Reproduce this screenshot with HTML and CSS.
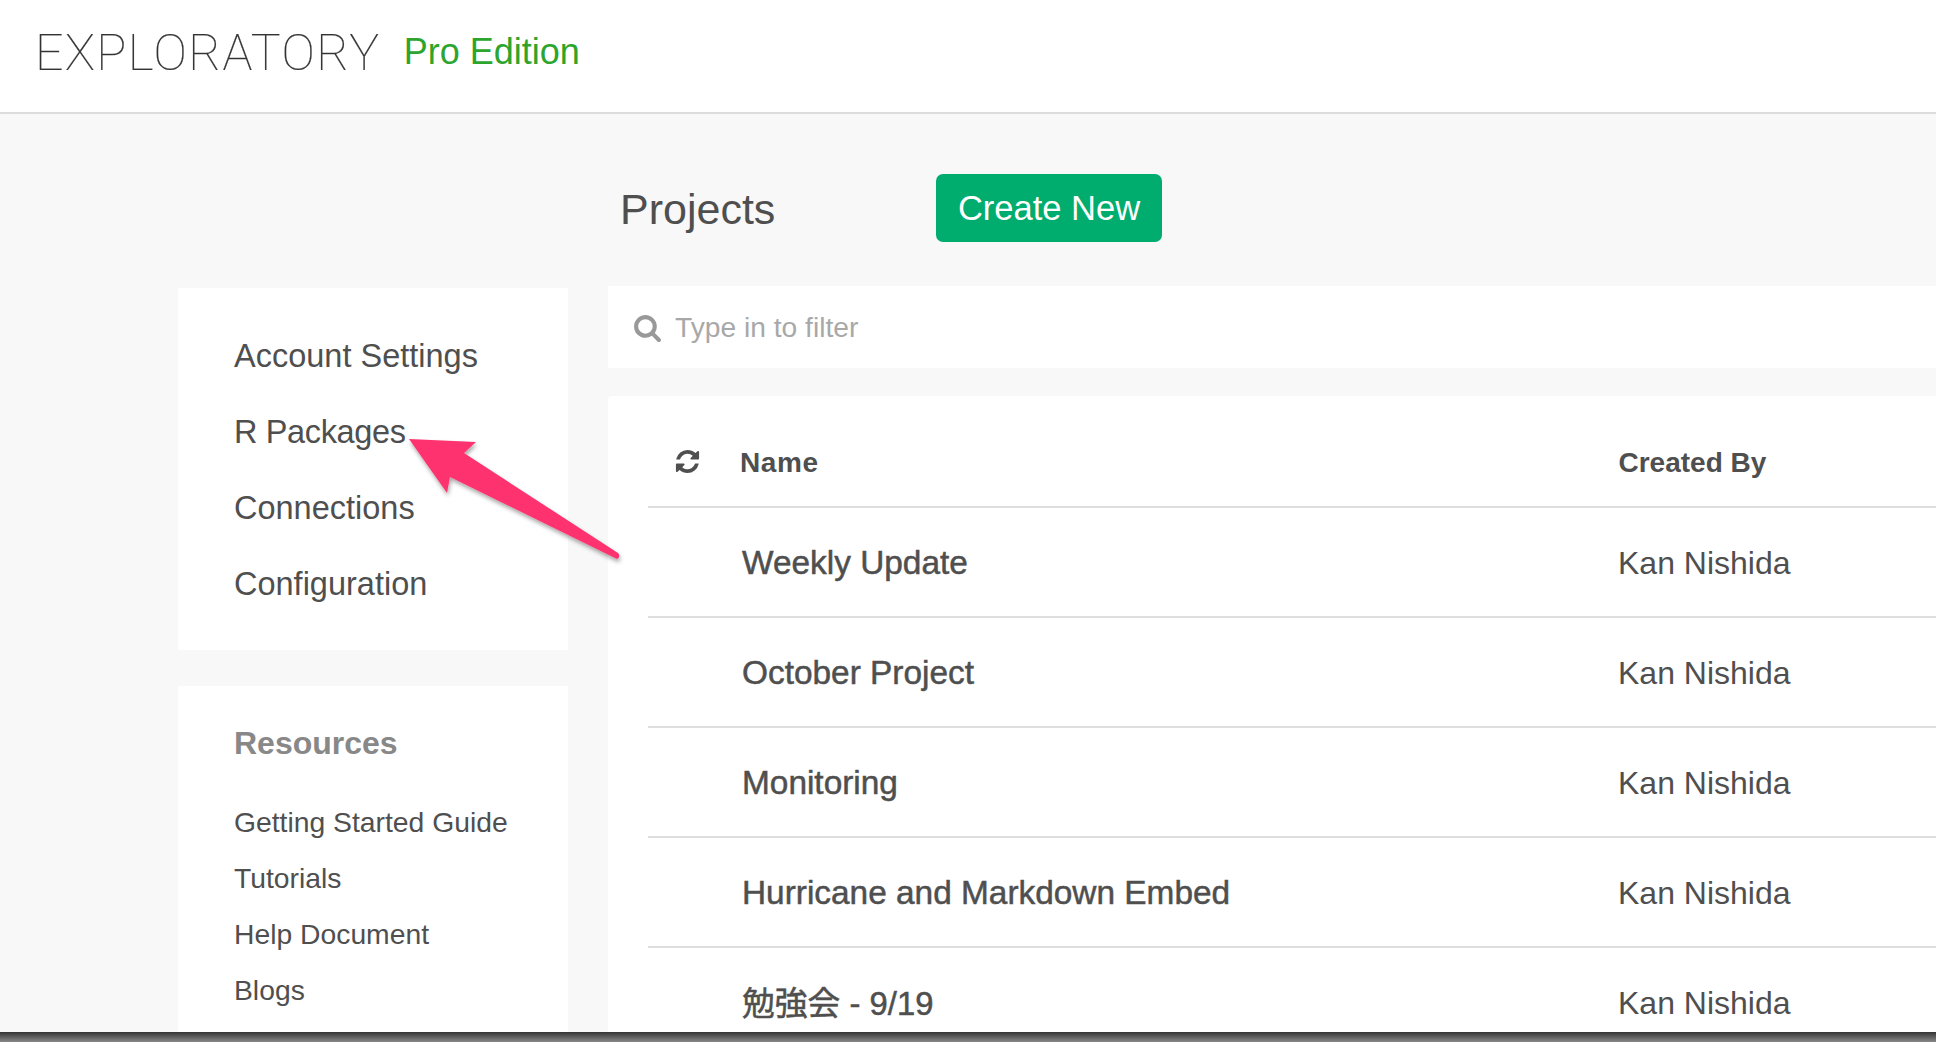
FILE: index.html
```html
<!DOCTYPE html>
<html lang="en">
<head>
<meta charset="UTF-8">
<title>Exploratory - Projects</title>
<link rel="stylesheet" href="styles.css">
</head>
<body>
<header class="topbar">
    <span class="logo">EXPLORATORY</span>
    <span class="edition">Pro Edition</span>
</header>

<div class="page">
    <aside class="sidebar">
        <nav class="card side-menu">
            <a>Account Settings</a>
            <a class="tight">R Packages</a>
            <a>Connections</a>
            <a>Configuration</a>
        </nav>
        <div class="card resources">
            <h3>Resources</h3>
            <a>Getting Started Guide</a>
            <a>Tutorials</a>
            <a>Help Document</a>
            <a>Blogs</a>
        </div>
    </aside>

    <main class="content">
        <div class="title-row">
            <h1>Projects</h1>
            <button class="create-btn">Create New</button>
        </div>
        <div class="filter">
            <svg class="search-icon" viewBox="0 0 1792 1792"><path d="M1216 832q0-185-131.5-316.5t-316.5-131.5-316.5 131.5-131.5 316.5 131.5 316.5 316.5 131.5 316.5-131.5 131.5-316.5zm512 832q0 52-38 90t-90 38q-54 0-90-38l-343-342q-179 124-399 124-143 0-273.5-55.5t-225-150-150-225-55.5-273.5 55.5-273.5 150-225 225-150 273.5-55.5 273.5 55.5 225 150 150 225 55.5 273.5q0 220-124 399l343 343q37 37 37 90z"/></svg>
            <span>Type in to filter</span>
        </div>
        <div class="card table-card">
            <div class="row head-row">
                <svg class="refresh-icon" viewBox="0 0 1792 1792"><path d="M1639 1056q0 5-1 7-64 268-268 434.5t-478 166.5q-146 0-282.5-55t-243.5-157l-129 129q-19 19-45 19t-45-19-19-45v-448q0-26 19-45t45-19h448q26 0 45 19t19 45-19 45l-137 137q71 66 161 102t187 36q134 0 250-65t186-179q11-17 53-117 8-23 30-23h192q13 0 22.5 9.5t9.5 22.5zm25-800v448q0 26-19 45t-45 19h-448q-26 0-45-19t-19-45 19-45l138-138q-148-137-349-137-134 0-250 65t-186 179q-11 17-53 117-8 23-30 23h-199q-13 0-22.5-9.5t-9.5-22.5v-7q65-268 270-434.5t480-166.5q146 0 284 55.5t245 156.5l130-129q19-19 45-19t45 19 19 45z"/></svg>
                <span class="name">Name</span>
                <span class="owner">Created By</span>
            </div>
            <div class="row"><span class="name">Weekly Update</span><span class="owner">Kan Nishida</span></div>
            <div class="row"><span class="name">October Project</span><span class="owner">Kan Nishida</span></div>
            <div class="row"><span class="name">Monitoring</span><span class="owner">Kan Nishida</span></div>
            <div class="row"><span class="name">Hurricane and Markdown Embed</span><span class="owner">Kan Nishida</span></div>
            <div class="row"><span class="name cjk">勉強会 - 9/19</span><span class="owner">Kan Nishida</span></div>
        </div>
    </main>
</div>

<div class="bottom-edge"></div>

<svg class="arrow" viewBox="0 0 240 140" width="240" height="140">
    <defs>
        <filter id="arrowShadow" x="-10%" y="-10%" width="125%" height="130%">
            <feDropShadow dx="1" dy="3" stdDeviation="2" flood-color="#000" flood-opacity="0.35"/>
        </filter>
    </defs>
    <path filter="url(#arrowShadow)" d="M9 9 L76 12 L64 23 L218 123 Q221 127 217 129 L50 47 L47 63 Z"/>
</svg>
</body>
</html>
```

FILE: styles.css
```css
* {
    box-sizing: border-box;
}
html, body {
    height: 100%;
}
body {
    margin: 0;
    display: flex;
    flex-direction: column;
    overflow: hidden;
    background: #f8f8f8;
    color: #4f4f4f;
    font-family: "Liberation Sans", "Noto Sans CJK JP", sans-serif;
}
.topbar {
    flex: none;
    display: flex;
    align-items: center;
    height: 114px;
    padding: 0 0 8px 35px;
    background: #fff;
    border-bottom: 2px solid #dcdcdc;
}
.logo {
    margin-top: 2px;
    font-family: Roboto, sans-serif;
    font-weight: 100;
    font-size: 50px;
    letter-spacing: 1.5px;
    color: #333;
    -webkit-text-stroke: 0.2px #444;
}
.edition {
    margin-left: 23px;
    font-size: 36px;
    color: #2ca52e;
}
.page {
    flex: 1;
    min-height: 0;
    display: flex;
    padding-left: 178px;
    gap: 40px;
    overflow: hidden;
}
.sidebar {
    flex: none;
    width: 390px;
    padding-top: 174px;
}
.card {
    background: #fff;
}
.side-menu {
    display: flex;
    flex-direction: column;
    height: 362px;
    padding: 30px 0 0 56px;
    font-size: 32.5px;
}
.side-menu a {
    height: 76px;
    line-height: 76px;
}
.side-menu .tight {
    letter-spacing: -0.37px;
}
.resources {
    margin-top: 36px;
    height: 400px;
    padding: 33px 0 0 56px;
}
.resources h3 {
    margin: 0 0 27px;
    font-size: 32px;
    line-height: 48px;
    color: #888;
}
.resources a {
    display: block;
    font-size: 28.3px;
    line-height: 56px;
}
.content {
    flex: 1;
    min-width: 0;
}
.title-row {
    display: flex;
    align-items: center;
    height: 172px;
    padding: 16px 0 0 12px;
}
.title-row h1 {
    margin: 2px 0 0;
    width: 316px;
    font-size: 43px;
    font-weight: normal;
}
.create-btn {
    width: 226px;
    height: 68px;
    border: none;
    border-radius: 7px;
    background: #00ad6e;
    color: #fff;
    font-family: inherit;
    font-size: 34.5px;
}
.filter {
    display: flex;
    align-items: center;
    height: 82px;
    padding-left: 25px;
    background: #fff;
    color: #a8a8a8;
    font-size: 28.2px;
}
.search-icon {
    width: 29px;
    height: 29px;
    margin-right: 13px;
    fill: #999;
}
.table-card {
    margin-top: 28px;
    height: 640px;
    padding-left: 40px;
    border-radius: 4px 0 0 0;
}
.row {
    display: flex;
    align-items: center;
    height: 110px;
    padding: 2px 0 0 94px;
    border-bottom: 2px solid #dedede;
    font-size: 32px;
}
.row .name {
    width: 876px;
    flex: none;
    font-size: 33.4px;
    -webkit-text-stroke: 0.5px #4f4f4f;
}
.row .cjk {
    margin-bottom: 5px;
    font-size: 32.8px;
}
.head-row {
    height: 112px;
    padding: 24px 0 0 92px;
    position: relative;
    font-size: 28px;
    font-weight: bold;
}
.head-row .name {
    width: 878.5px;
    font-size: 28px;
    letter-spacing: 0.6px;
    -webkit-text-stroke: 0;
}
.refresh-icon {
    position: absolute;
    left: 26px;
    top: 52px;
    width: 27px;
    height: 27px;
    fill: #4f4f4f;
}
.bottom-edge {
    flex: none;
    height: 10px;
    background: linear-gradient(#333, #888);
}
.arrow {
    position: absolute;
    left: 400px;
    top: 430px;
    fill: #ff3370;
}
```
